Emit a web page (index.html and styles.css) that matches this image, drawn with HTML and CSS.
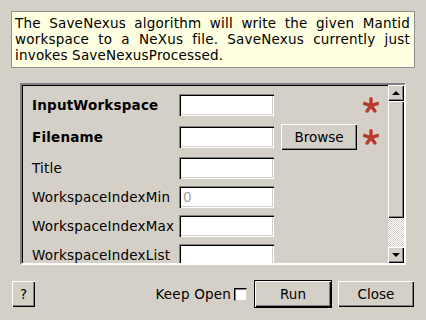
FILE: index.html
```html
<!DOCTYPE html>
<html lang="en">
<head>
  <meta charset="UTF-8">
  <title>SaveNexus</title>
  <link rel="stylesheet" href="styles.css">
</head>
<body>
  <div class="description">
    The SaveNexus algorithm will write the given Mantid workspace to a NeXus file. SaveNexus currently just invokes SaveNexusProcessed.
  </div>

  <div class="panel">
    <div class="props">
      <label class="prop-name required">InputWorkspace</label>
      <input class="field" type="text">
      <span></span>
      <svg class="star" viewBox="0 0 16 16"><use href="#star"/></svg>

      <label class="prop-name required">Filename</label>
      <input class="field" type="text">
      <button class="btn browse">Browse</button>
      <svg class="star" viewBox="0 0 16 16"><use href="#star"/></svg>

      <label class="prop-name">Title</label>
      <input class="field" type="text">
      <span></span><span></span>

      <label class="prop-name">WorkspaceIndexMin</label>
      <input class="field" type="text" placeholder="0">
      <span></span><span></span>

      <label class="prop-name">WorkspaceIndexMax</label>
      <input class="field" type="text">
      <span></span><span></span>

      <label class="prop-name">WorkspaceIndexList</label>
      <input class="field" type="text">
      <span></span><span></span>
    </div>
    <div class="scrollbar">
      <div class="btn scroll-btn"><span class="arrow up"></span></div>
      <div class="btn slider"></div>
      <div class="trough"></div>
      <div class="btn scroll-btn"><span class="arrow down"></span></div>
    </div>
  </div>

  <div class="actions">
    <button class="btn help">?</button>
    <span class="keep-open">Keep Open</span>
    <span class="checkbox"></span>
    <button class="btn run">Run</button>
    <button class="btn close">Close</button>
  </div>

  <svg width="0" height="0" class="defs">
    <defs>
      <g id="star" stroke="#b83a2c" stroke-width="3.4" stroke-linecap="round">
        <line x1="8" y1="8.6" x2="8" y2="1.8"/>
        <line x1="8" y1="8.6" x2="14.3" y2="6.6"/>
        <line x1="8" y1="8.6" x2="1.7" y2="6.6"/>
        <line x1="8" y1="8.6" x2="11.9" y2="14"/>
        <line x1="8" y1="8.6" x2="4.1" y2="14"/>
      </g>
    </defs>
  </svg>
</body>
</html>
```

FILE: styles.css
```css
body {
  margin: 0;
  width: 426px;
  height: 320px;
  background: #d4d0c8;
  font-family: "DejaVu Sans", sans-serif;
  font-size: 13.5px;
  letter-spacing: 0.2px;
  color: #000;
  display: flex;
  flex-direction: column;
  overflow: hidden;
}

.description {
  margin: 11px 11px 0 11px;
  height: 50px;
  padding: 3px 4px 2px 3px;
  border: 1px solid #909090;
  background: #ffffe1;
  line-height: 16px;
  text-align: justify;
}

.panel {
  margin: 15px 20px 0 20px;
  height: 178px;
  display: flex;
  border: 2px solid;
  border-color: #808080 #fff #fff #808080;
  box-shadow: inset 1px 1px #000;
}

.props {
  flex: 1;
  overflow: hidden;
  padding: 7px 0 0 10px;
  display: grid;
  grid-template-columns: 147px 95px 83px 22px;
  grid-auto-rows: 22px;
  grid-template-rows: 25px 26px;
  row-gap: 7px;
  align-items: center;
}

.prop-name {
  white-space: nowrap;
}

.prop-name.required {
  font-weight: bold;
}

.field {
  box-sizing: border-box;
  width: 95px;
  height: 22px;
  margin: 0;
  border: none;
  padding: 2px 4px;
  background: #fff;
  font: inherit;
  box-shadow: inset 1px 1px #808080, inset 2px 2px #000, inset -1px -1px #fff, inset -2px -2px #d4d0c8;
}

.field::placeholder {
  color: #a0a0a0;
}

.btn {
  box-sizing: border-box;
  margin: 0;
  padding: 0;
  border: none;
  background: #d4d0c8;
  font: inherit;
  color: #000;
  box-shadow: inset 1px 1px #fff, inset -1px -1px #000, inset -2px -2px #808080;
}

.browse {
  justify-self: end;
  width: 76px;
  height: 26px;
}

.star {
  justify-self: end;
  width: 16px;
  height: 16px;
}

.defs {
  position: absolute;
}

.scrollbar {
  width: 16px;
  display: flex;
  flex-direction: column;
}

.scroll-btn {
  height: 16px;
  display: flex;
  align-items: center;
  justify-content: center;
}

.arrow {
  width: 0;
  height: 0;
  border-left: 4px solid transparent;
  border-right: 4px solid transparent;
}

.arrow.up {
  border-bottom: 4px solid #000;
  margin-top: -1px;
}

.arrow.down {
  border-top: 4px solid #000;
}

.slider {
  height: 117px;
}

.trough {
  flex: 1;
  background: repeating-conic-gradient(#fff 0 25%, #d4d0c8 0 50%) 0 0 / 2px 2px;
}

.actions {
  margin: 15px 12px 0 12px;
  height: 28px;
  display: flex;
  align-items: center;
}

.help {
  width: 23px;
  height: 26px;
}

.keep-open {
  margin-left: auto;
  margin-right: 3px;
}

.checkbox {
  box-sizing: border-box;
  width: 13px;
  height: 13px;
  background: #fff;
  box-shadow: inset 1px 1px #808080, inset -1px -1px #fff;
  border: 1px solid;
  border-color: #000 #d4d0c8 #d4d0c8 #000;
  margin-right: 7px;
}

.run {
  width: 78px;
  height: 28px;
  border: 1px solid #000;
}

.close {
  width: 76px;
  height: 26px;
  margin-left: 6px;
}
```
